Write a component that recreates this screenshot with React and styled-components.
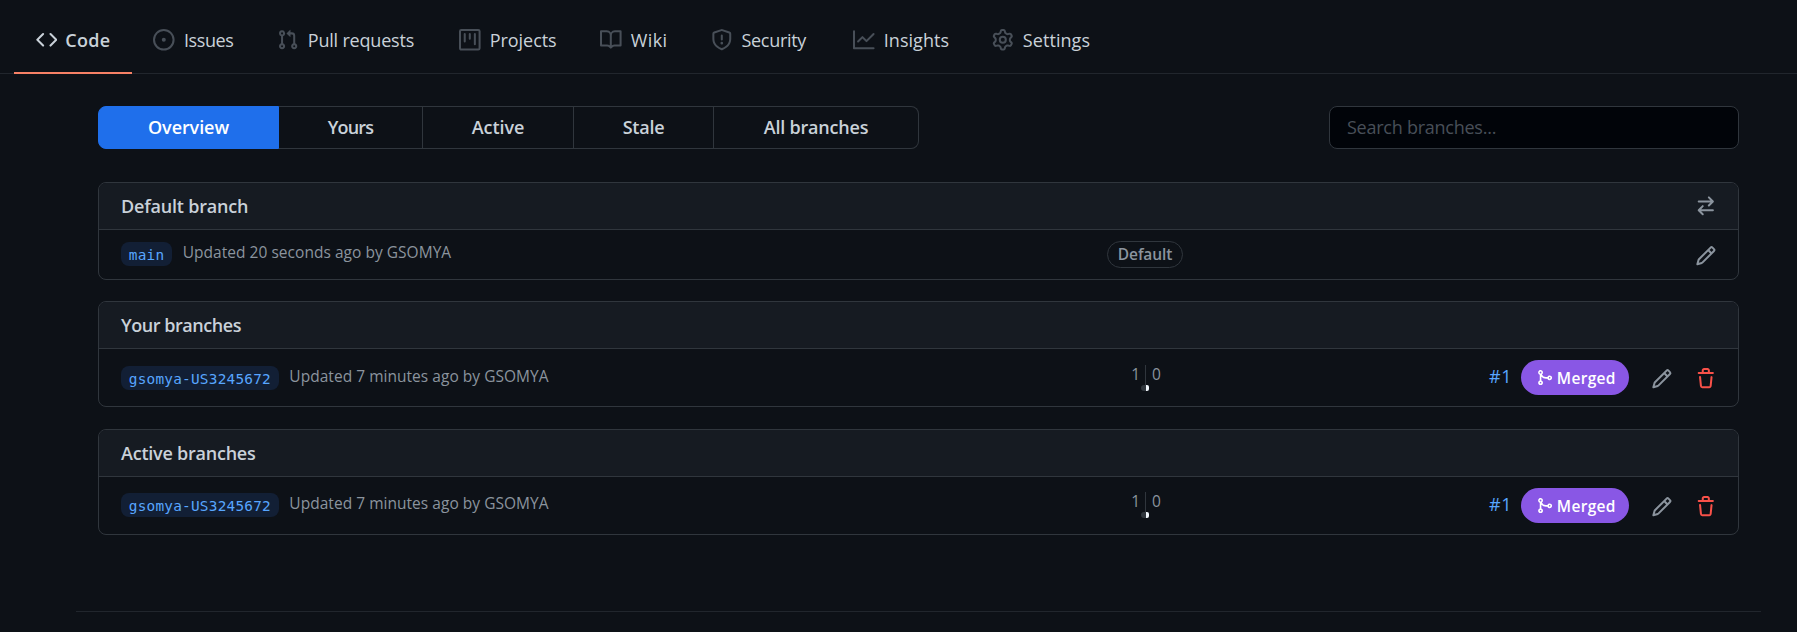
import React from 'react';
import styled, { createGlobalStyle } from 'styled-components';

const GlobalStyle = createGlobalStyle`
  *, *::before, *::after { box-sizing: border-box; }
  body {
    margin: 0;
    background: #0d1117;
    color: #c9d1d9;
    font-family: "Open Sans", "Noto Sans", sans-serif;
    font-size: 18px;
    line-height: 24px;
  }
`;

const PATHS = {
  code: 'M4.72 3.22a.75.75 0 011.06 1.06L2.06 8l3.72 3.72a.75.75 0 11-1.06 1.06L.47 8.53a.75.75 0 010-1.06l4.25-4.25zm6.56 0a.75.75 0 10-1.06 1.06L13.94 8l-3.72 3.72a.75.75 0 101.06 1.06l4.25-4.25a.75.75 0 000-1.06l-4.25-4.25z',
  issue: 'M8 9.5a1.5 1.5 0 100-3 1.5 1.5 0 000 3zM8 0a8 8 0 100 16A8 8 0 008 0zM1.5 8a6.5 6.5 0 1113 0 6.5 6.5 0 01-13 0z',
  pull: 'M7.177 3.073L9.573.677A.25.25 0 0110 .854v4.792a.25.25 0 01-.427.177L7.177 3.427a.25.25 0 010-.354zM3.75 2.5a.75.75 0 100 1.5.75.75 0 000-1.5zm-2.25.75a2.25 2.25 0 113 2.122v5.256a2.251 2.251 0 11-1.5 0V5.372A2.25 2.25 0 011.5 3.25zM11 2.5h-1V4h1a1 1 0 011 1v5.628a2.251 2.251 0 101.5 0V5A2.5 2.5 0 0011 2.5zm1 10.25a.75.75 0 111.5 0 .75.75 0 01-1.5 0zM3.75 12a.75.75 0 100 1.5.75.75 0 000-1.5z',
  project: 'M1.75 0A1.75 1.75 0 000 1.75v12.5C0 15.216.784 16 1.75 16h12.5A1.75 1.75 0 0016 14.25V1.75A1.75 1.75 0 0014.25 0H1.75zM1.5 1.75a.25.25 0 01.25-.25h12.5a.25.25 0 01.25.25v12.5a.25.25 0 01-.25.25H1.75a.25.25 0 01-.25-.25V1.75zM11.75 3a.75.75 0 00-.75.75v7.5a.75.75 0 001.5 0v-7.5a.75.75 0 00-.75-.75zm-8.25.75a.75.75 0 011.5 0v5.5a.75.75 0 01-1.5 0v-5.5zM8 3a.75.75 0 00-.75.75v3.5a.75.75 0 001.5 0v-3.5A.75.75 0 008 3z',
  book: 'M0 1.75A.75.75 0 01.75 1h4.253c1.227 0 2.317.59 3 1.501A3.744 3.744 0 0111.006 1h4.245a.75.75 0 01.75.75v10.5a.75.75 0 01-.75.75h-4.507a2.25 2.25 0 00-1.591.659l-.622.621a.75.75 0 01-1.06 0l-.622-.621A2.25 2.25 0 005.258 13H.75a.75.75 0 01-.75-.75V1.75zm8.755 3a2.25 2.25 0 012.25-2.25H14.5v9h-3.757c-.71 0-1.4.201-1.992.572l.004-7.322zm-1.504 7.324l.004-5.073-.002-2.253A2.25 2.25 0 005.003 2.5H1.5v9h3.757a3.75 3.75 0 011.994.574z',
  shield: 'M7.467.133a1.75 1.75 0 011.066 0l5.25 1.68A1.75 1.75 0 0115 3.48V7c0 1.566-.32 3.182-1.303 4.682-.983 1.498-2.585 2.813-5.032 3.855a1.7 1.7 0 01-1.33 0c-2.447-1.042-4.049-2.357-5.032-3.855C1.32 10.182 1 8.566 1 7V3.48a1.75 1.75 0 011.217-1.667l5.25-1.68zm.61 1.429a.25.25 0 00-.153 0l-5.25 1.68a.25.25 0 00-.174.238V7c0 1.358.275 2.666 1.057 3.86.784 1.194 2.121 2.34 4.366 3.297a.2.2 0 00.154 0c2.245-.956 3.582-2.104 4.366-3.298C13.225 9.666 13.5 8.36 13.5 7V3.48a.25.25 0 00-.174-.237l-5.25-1.68zM9 10.5a1 1 0 11-2 0 1 1 0 012 0zm-.25-5.75a.75.75 0 10-1.5 0v3a.75.75 0 001.5 0v-3z',
  graph: 'M1.5 1.75a.75.75 0 00-1.5 0v12.5c0 .414.336.75.75.75h14.5a.75.75 0 000-1.5H1.5V1.75zm14.28 2.53a.75.75 0 00-1.06-1.06L10 7.94 7.53 5.47a.75.75 0 00-1.06 0L3.22 8.72a.75.75 0 001.06 1.06L7 7.06l2.47 2.47a.75.75 0 001.06 0l5.25-5.25z',
  gear: 'M7.429 1.525a6.593 6.593 0 011.142 0c.036.003.108.036.137.146l.289 1.105c.147.56.55.967.997 1.189.174.086.341.183.501.29.417.278.97.423 1.53.27l1.102-.303c.11-.03.175.016.195.046.219.31.41.641.573.989.014.031.022.11-.059.19l-.815.806c-.411.406-.562.957-.53 1.456a4.588 4.588 0 010 .582c-.032.499.119 1.05.53 1.456l.815.806c.08.08.073.159.059.19a6.494 6.494 0 01-.573.99c-.02.029-.086.074-.195.045l-1.103-.303c-.559-.153-1.112-.008-1.529.27-.16.107-.327.204-.5.29-.449.222-.851.628-.998 1.189l-.289 1.105c-.029.11-.101.143-.137.146a6.613 6.613 0 01-1.142 0c-.036-.003-.108-.037-.137-.146l-.289-1.105c-.147-.56-.55-.967-.997-1.189a4.502 4.502 0 01-.501-.29c-.417-.278-.97-.423-1.53-.27l-1.102.303c-.11.03-.175-.016-.195-.046a6.492 6.492 0 01-.573-.989c-.014-.031-.022-.11.059-.19l.815-.806c.411-.406.562-.957.53-1.456a4.587 4.587 0 010-.582c.032-.499-.119-1.05-.53-1.456l-.815-.806c-.08-.08-.073-.159-.059-.19a6.44 6.44 0 01.573-.99c.02-.029.086-.075.195-.045l1.103.303c.559.153 1.112.008 1.529-.27.16-.107.327-.204.5-.29.449-.222.851-.628.998-1.189l.289-1.105c.029-.11.101-.143.137-.146zM8 0c-.236 0-.47.01-.701.03-.743.065-1.29.615-1.458 1.261l-.29 1.106c-.017.066-.078.158-.211.224a5.994 5.994 0 00-.668.386c-.123.082-.233.09-.3.071L3.27 2.776c-.644-.177-1.392.02-1.82.63a7.977 7.977 0 00-.704 1.217c-.315.675-.111 1.422.363 1.891l.815.806c.05.048.098.147.088.294a6.084 6.084 0 000 .772c.01.147-.038.246-.088.294l-.815.806c-.474.469-.678 1.216-.363 1.891.2.428.436.835.704 1.218.428.609 1.176.806 1.82.63l1.103-.303c.066-.019.176-.011.299.071.213.143.436.272.668.386.133.066.194.158.212.224l.289 1.106c.169.646.715 1.196 1.458 1.26a8.094 8.094 0 001.402 0c.743-.064 1.29-.614 1.458-1.26l.29-1.106c.017-.066.078-.158.211-.224a5.98 5.98 0 00.668-.386c.123-.082.233-.09.3-.071l1.102.302c.644.177 1.392-.02 1.82-.63.268-.382.505-.789.704-1.217.315-.675.111-1.422-.364-1.891l-.814-.806c-.05-.048-.098-.147-.088-.294a6.1 6.1 0 000-.772c-.01-.147.039-.246.088-.294l.814-.806c.475-.469.679-1.216.364-1.891a7.992 7.992 0 00-.704-1.218c-.428-.609-1.176-.806-1.82-.63l-1.103.303c-.066.019-.176.011-.299-.071a5.991 5.991 0 00-.668-.386c-.133-.066-.194-.158-.212-.224L10.16 1.29C9.99.645 9.444.095 8.701.031A8.094 8.094 0 008 0zm1.5 8a1.5 1.5 0 11-3 0 1.5 1.5 0 013 0zM11 8a3 3 0 11-6 0 3 3 0 016 0z',
  merge: 'M5 3.254V3.25v.005a.75.75 0 110-.005v.004zm.45 1.9a2.25 2.25 0 10-1.95.218v5.256a2.25 2.25 0 101.5 0V7.123A5.735 5.735 0 009.25 9h1.378a2.251 2.251 0 100-1.5H9.25a4.25 4.25 0 01-3.8-2.346zM12.75 9a.75.75 0 100-1.5.75.75 0 000 1.5zm-8.5 4.5a.75.75 0 100-1.5.75.75 0 000 1.5z',
  swap: 'M5.22 14.78a.75.75 0 001.06-1.06L4.56 12h8.69a.75.75 0 000-1.5H4.56l1.72-1.72a.75.75 0 00-1.06-1.06l-3 3a.75.75 0 000 1.06l3 3zm5.56-6.5a.75.75 0 11-1.06-1.06l1.72-1.72H2.75a.75.75 0 010-1.5h8.69L9.72 2.28a.75.75 0 011.06-1.06l3 3a.75.75 0 010 1.06l-3 3z',
  pencil: 'M11.013 1.427a1.75 1.75 0 012.474 0l1.086 1.086a1.75 1.75 0 010 2.474l-8.61 8.61c-.21.21-.47.364-.756.445l-3.251.93a.75.75 0 01-.927-.928l.929-3.25a1.75 1.75 0 01.445-.758l8.61-8.61zm1.414 1.06a.25.25 0 00-.354 0L10.811 3.75l1.439 1.44 1.263-1.263a.25.25 0 000-.354l-1.086-1.086zM11.189 6.25L9.75 4.81l-6.286 6.287a.25.25 0 00-.064.108l-.558 1.953 1.953-.558a.249.249 0 00.108-.064l6.286-6.286z',
  trash: 'M6.5 1.75a.25.25 0 01.25-.25h2.5a.25.25 0 01.25.25V3h-3V1.75zm4.5 0V3h2.25a.75.75 0 010 1.5H2.75a.75.75 0 010-1.5H5V1.75C5 .784 5.784 0 6.75 0h2.5C10.216 0 11 .784 11 1.75zM4.496 6.675a.75.75 0 10-1.492.15l.66 6.6A1.75 1.75 0 005.405 15h5.19c.9 0 1.652-.681 1.741-1.576l.66-6.6a.75.75 0 00-1.492-.149l-.66 6.6a.25.25 0 01-.249.225h-5.19a.25.25 0 01-.249-.225l-.66-6.6z',
};

const Svg = styled.svg`
  display: block;
  flex: none;
  width: ${(p) => p.$size}px;
  height: ${(p) => p.$size}px;
  fill: currentColor;
`;

const Icon = ({ name, size = 21.6 }) => (
  <Svg viewBox="0 0 16 16" $size={size} aria-hidden="true">
    <path fillRule="evenodd" d={PATHS[name]} />
  </Svg>
);

const Page = styled.div`
  display: flex;
  flex-direction: column;
  height: 632px;
  overflow: hidden;
`;

const Nav = styled.nav`
  display: flex;
  height: 74px;
  padding-left: 14px;
  box-shadow: inset 0 -1px #21262d;
`;

const NavItem = styled.a`
  display: flex;
  align-items: center;
  gap: ${(p) => (p.$active ? 8 : 9.2)}px;
  width: ${(p) => p.$width}px;
  padding: 8px 0 0 ${(p) => (p.$active ? 21.6 : 21.2)}px;
  letter-spacing: ${(p) => p.$track}px;
  font-weight: ${(p) => (p.$active ? 600 : 400)};
  white-space: nowrap;
  border-bottom: 2px solid ${(p) => (p.$active ? '#f78166' : 'transparent')};

  svg { color: ${(p) => (p.$active ? '#c9d1d9' : '#484f58')}; }
`;

const Content = styled.main`
  display: flex;
  flex-direction: column;
  padding: 32px 58px 0 98px;
`;

const Toolbar = styled.div`
  display: flex;
  justify-content: space-between;
  height: 43px;
  margin-bottom: 33px;
`;

const Tabs = styled.div`
  display: flex;
`;

const Tab = styled.button`
  width: ${(p) => p.$width}px;
  padding: 0 0 2px;
  font: inherit;
  font-weight: 600;
  letter-spacing: ${(p) => p.$track}px;
  color: ${(p) => (p.$selected ? '#fff' : '#c9d1d9')};
  background: ${(p) => (p.$selected ? '#1f6feb' : 'transparent')};
  border: 1px solid ${(p) => (p.$selected ? '#1f6feb' : '#30363d')};
  border-left-width: ${(p) => (p.$selected ? 1 : 0)}px;

  &:first-child { border-radius: 8px 0 0 8px; }
  &:last-child { border-radius: 0 8px 8px 0; }
`;

const Search = styled.input`
  width: 410px;
  padding: 0 17px 2px;
  font: inherit;
  letter-spacing: -0.25px;
  color: #c9d1d9;
  background: #010409;
  border: 1px solid #30363d;
  border-radius: 8px;
  outline: none;

  &::placeholder { color: #484f58; opacity: 1; }
`;

const Box = styled.section`
  margin-bottom: ${(p) => p.$gap}px;
  border: 1px solid #30363d;
  border-radius: 8px;
  overflow: hidden;
`;

const BoxHeader = styled.header`
  display: flex;
  align-items: center;
  justify-content: space-between;
  height: 47px;
  padding: 0 21.8px 0 22px;
  background: #161b22;
  border-bottom: 1px solid #30363d;
  color: #8b949e;
`;

const BoxTitle = styled.h2`
  margin: 0;
  font-size: 18px;
  font-weight: 600;
  letter-spacing: ${(p) => p.$track}px;
  color: #c9d1d9;
`;

const Row = styled.div`
  display: grid;
  grid-template-columns: 964px 120px 1fr;
  align-items: center;
  height: ${(p) => p.$height}px;
  padding: 0 21.8px 0 22px;
  color: #8b949e;
`;

const NameCell = styled.div`
  display: flex;
  align-items: center;
  gap: 10.6px;
  padding-bottom: ${(p) => p.$lift}px;
`;

const BranchName = styled.a`
  display: flex;
  height: 24px;
  padding: 1px 7.8px 0;
  font: 14.4px/24px "DejaVu Sans Mono", monospace;
  letter-spacing: 0.22px;
  color: #58a6ff;
  background: #121f35;
  border-radius: 8px;
`;

const Updated = styled.span`
  padding-bottom: 4px;
  font-size: 15.5px;
  letter-spacing: 0.03px;
`;

const StatusCell = styled.div`
  display: flex;
  justify-content: center;
  padding-bottom: ${(p) => p.$lift}px;
`;

const DefaultLabel = styled.span`
  width: 76px;
  height: 27px;
  border: 1px solid #30363d;
  border-radius: 14px;
  font-size: 15.5px;
  font-weight: 600;
  line-height: 25px;
  letter-spacing: -0.13px;
  text-align: center;
`;

const Divergence = styled.div`
  display: grid;
  grid-template-columns: 61px 59px;
  grid-template-rows: 20px 6px;
  font-size: 15.5px;
  line-height: 18px;
`;

const Behind = styled.span`
  padding-right: 5px;
  text-align: right;
  border-right: 1px solid #30363d;
`;

const Ahead = styled.span`
  padding-left: 6px;
`;

const BehindBar = styled.span`
  justify-self: end;
  width: 5px;
  background: #30363d;
  border-radius: 3px 0 0 3px;
`;

const AheadBar = styled.span`
  width: 3px;
  background: #f0f6fc;
  border-radius: 0 2px 2px 0;
`;

const Actions = styled.div`
  display: flex;
  align-items: center;
  justify-content: flex-end;
`;

const PullLink = styled.a`
  padding-bottom: 4px;
  margin-right: 9.4px;
  letter-spacing: 0.5px;
  color: #58a6ff;
`;

const MergedPill = styled.span`
  display: flex;
  align-items: center;
  gap: 3.2px;
  width: 108px;
  height: 35px;
  padding: ${(p) => (p.$lift ? 0 : 1)}px 0 0 15px;
  font-size: 15.5px;
  font-weight: 600;
  letter-spacing: 0.32px;
  color: #fff;
  background: #8957e5;
  border-radius: 18px;
`;

const IconButton = styled.button`
  display: flex;
  margin-left: ${(p) => p.$space || 0}px;
  padding: 2px 0 0;
  color: ${(p) => (p.$danger ? '#f85149' : '#8b949e')};
  background: none;
  border: 0;
`;

const Footer = styled.footer`
  flex: none;
  height: 1px;
  margin: 76px 36px 0 76px;
  background: #21262d;
`;

const NAV = [
  { icon: 'code', text: 'Code', width: 118, track: 0.3, active: true },
  { icon: 'issue', text: 'Issues', width: 123.8, track: -0.41 },
  { icon: 'pull', text: 'Pull requests', width: 182, track: -0.19 },
  { icon: 'project', text: 'Projects', width: 141, track: -0.06 },
  { icon: 'book', text: 'Wiki', width: 110.7, track: 0.36 },
  { icon: 'shield', text: 'Security', width: 142.3, track: -0.3 },
  { icon: 'graph', text: 'Insights', width: 139, track: 0.04 },
  { icon: 'gear', text: 'Settings', width: 130, track: 0.08 },
];

const TABS = [
  { text: 'Overview', width: 181, track: -0.08, selected: true },
  { text: 'Yours', width: 144, track: -0.8 },
  { text: 'Active', width: 151, track: -0.06 },
  { text: 'Stale', width: 140, track: -0.22 },
  { text: 'All branches', width: 205, track: -0.2 },
];

const BranchRow = ({ lift = 0 }) => (
  <Row $height={57}>
    <NameCell $lift={lift}>
      <BranchName>gsomya-US3245672</BranchName>
      <Updated>Updated 7 minutes ago by GSOMYA</Updated>
    </NameCell>
    <StatusCell $lift={lift}>
      <Divergence>
        <Behind>1</Behind>
        <Ahead>0</Ahead>
        <BehindBar />
        <AheadBar />
      </Divergence>
    </StatusCell>
    <Actions>
      <PullLink>#1</PullLink>
      <MergedPill $lift={lift}>
        <Icon name="merge" size={17.2} />
        Merged
      </MergedPill>
      <IconButton $space={22} aria-label="Rename branch"><Icon name="pencil" /></IconButton>
      <IconButton $space={21.6} $danger aria-label="Delete branch"><Icon name="trash" /></IconButton>
    </Actions>
  </Row>
);

export default function App() {
  return (
    <Page>
      <GlobalStyle />
      <Nav>
        {NAV.map((n) => (
          <NavItem key={n.text} $width={n.width} $track={n.track} $active={n.active}>
            <Icon name={n.icon} />
            {n.text}
          </NavItem>
        ))}
      </Nav>
      <Content>
        <Toolbar>
          <Tabs>
            {TABS.map((t) => (
              <Tab key={t.text} $width={t.width} $track={t.track} $selected={t.selected}>{t.text}</Tab>
            ))}
          </Tabs>
          <Search placeholder="Search branches..." />
        </Toolbar>
        <Box $gap={21}>
          <BoxHeader>
            <BoxTitle $track={-0.2}>Default branch</BoxTitle>
            <Icon name="swap" />
          </BoxHeader>
          <Row $height={49}>
            <NameCell $lift={1}>
              <BranchName>main</BranchName>
              <Updated>Updated 20 seconds ago by GSOMYA</Updated>
            </NameCell>
            <StatusCell $lift={0}>
              <DefaultLabel>Default</DefaultLabel>
            </StatusCell>
            <Actions>
              <IconButton aria-label="Rename branch"><Icon name="pencil" /></IconButton>
            </Actions>
          </Row>
        </Box>
        <Box $gap={22}>
          <BoxHeader>
            <BoxTitle $track={-0.45}>Your branches</BoxTitle>
          </BoxHeader>
          <BranchRow />
        </Box>
        <Box $gap={0}>
          <BoxHeader>
            <BoxTitle $track={-0.23}>Active branches</BoxTitle>
          </BoxHeader>
          <BranchRow lift={2} />
        </Box>
      </Content>
      <Footer />
    </Page>
  );
}
